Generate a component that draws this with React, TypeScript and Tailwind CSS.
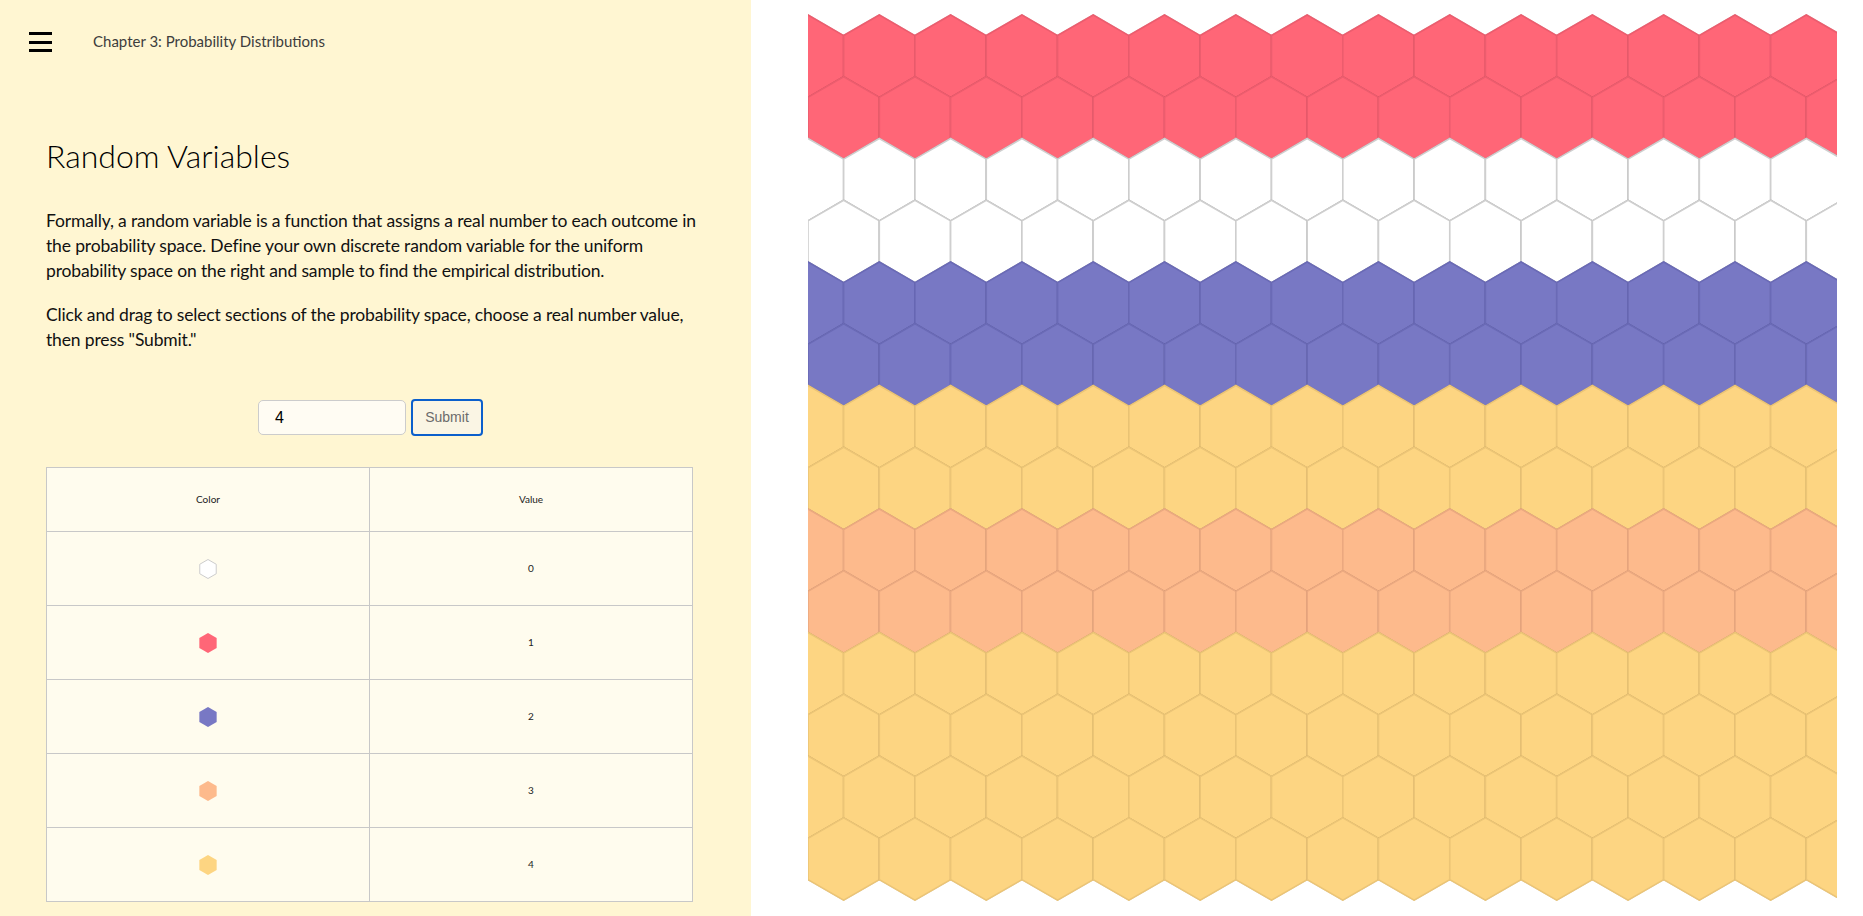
import React from "react";

const S = 41.17;
const W = S * Math.sqrt(3);

type HexStyle = { fill: string; stroke: string };
const RED: HexStyle = { fill: "#FF6677", stroke: "#EC5D6E" };
const WHITE: HexStyle = { fill: "#FFFFFF", stroke: "#CFCFCF" };
const BLUE: HexStyle = { fill: "#7878C4", stroke: "#6A6AB6" };
const YELLOW: HexStyle = { fill: "#FDD582", stroke: "#ECC576" };
const ORANGE: HexStyle = { fill: "#FDBA8C", stroke: "#EBA980" };

const rowStyles: HexStyle[] = [RED, RED, WHITE, WHITE, BLUE, BLUE, YELLOW, YELLOW, ORANGE, ORANGE, YELLOW, YELLOW, YELLOW, YELLOW];

function hexPoints(cx: number, cy: number, s: number) {
  const pts: string[] = [];
  for (let i = 0; i < 6; i++) {
    const a = ((-90 + 60 * i) * Math.PI) / 180;
    pts.push(`${(cx + s * Math.cos(a)).toFixed(2)},${(cy + s * Math.sin(a)).toFixed(2)}`);
  }
  return pts.join(" ");
}

function HexGrid() {
  const hexes: React.ReactNode[] = [];
  rowStyles.forEach((st, r) => {
    const cy = 15 + S + r * 1.5 * S;
    const offset = r % 2 === 0 ? 0 : W / 2;
    for (let k = -1; k <= 15; k++) {
      const cx = offset + k * W;
      hexes.push(
        <polygon
          key={`${r}-${k}`}
          points={hexPoints(cx, cy, S)}
          fill={st.fill}
          stroke={st.stroke}
          strokeWidth={1.6}
          filter="url(#hs)"
        />
      );
    }
  });
  return (
    <svg width={1029} height={916} viewBox="0 0 1029 916" className="block">
      <defs>
        <filter id="hs" x="-10%" y="-10%" width="120%" height="120%">
          <feDropShadow dx="0" dy="0" stdDeviation="0.7" floodColor="#000" floodOpacity="0.35" />
        </filter>
      </defs>
      {hexes}
    </svg>
  );
}

function MiniHex({ st, light }: { st: HexStyle; light?: boolean }) {
  return (
    <svg width={20} height={22} viewBox="0 0 20 22" className="inline-block">
      <polygon
        points={hexPoints(10, 11, light ? 9.5 : 10)}
        fill={st.fill}
        stroke={light ? "#CDCDCD" : st.fill}
        strokeWidth={light ? 1 : 0}
      />
    </svg>
  );
}

const rows: { st: HexStyle; v: string; light?: boolean }[] = [
  { st: WHITE, v: "0", light: true },
  { st: RED, v: "1" },
  { st: BLUE, v: "2" },
  { st: ORANGE, v: "3" },
  { st: YELLOW, v: "4" },
];

export default function App() {
  return (
    <div className="flex w-[1863px] h-[916px] overflow-hidden bg-white" style={{ fontFamily: "Lato, 'Liberation Sans', sans-serif" }}>
      <div className="w-[751px] h-[916px] shrink-0 bg-[#FFF6D2] flex flex-col">
        <div className="h-[84px] flex items-center pl-[29px]">
          <div className="flex flex-col gap-[5.5px] w-[23px]">
            <div className="h-[3px] bg-black" />
            <div className="h-[3px] bg-black" />
            <div className="h-[3px] bg-black" />
          </div>
          <div className="ml-[41px] text-[15px] text-[#3d3d3d] leading-none -mt-[2px]">Chapter 3: Probability Distributions</div>
        </div>
        <div className="pl-[46px] pr-[58px] flex flex-col">
          <h1 className="mt-[52px] text-[32px] leading-[40px] font-light text-black">Random Variables</h1>
          <div className="mt-[32px] text-[17.5px] tracking-[-0.15px] leading-[25px] text-[#111]">
            <div className="whitespace-nowrap">Formally, a random variable is a function that assigns a real number to each outcome in</div>
            <div className="whitespace-nowrap">the probability space. Define your own discrete random variable for the uniform</div>
            <div className="whitespace-nowrap">probability space on the right and sample to find the empirical distribution.</div>
          </div>
          <div className="mt-[19px] text-[17.5px] tracking-[-0.15px] leading-[25px] text-[#111]">
            <div className="whitespace-nowrap">Click and drag to select sections of the probability space, choose a real number value,</div>
            <div className="whitespace-nowrap">then press "Submit."</div>
          </div>
          <div className="mt-[47px] pl-[2px] flex items-center justify-center gap-[5px]" style={{ fontFamily: "'Liberation Sans', Arial, sans-serif" }}>
            <div className="w-[148px] h-[35px] border border-[#CCCCCC] rounded-[5px] bg-[#FFFCF3] pl-[16px] flex items-center text-[16px] text-black">4</div>
            <button className="w-[72px] h-[37px] border-2 border-[#0B5FCC] rounded-[4px] bg-[#FAF5E4] text-[14px] text-[#6B6B6B]">Submit</button>
          </div>
          <table className="mt-[31px] w-[647px] border-collapse bg-[#FFFCEE] table-fixed">
            <thead>
              <tr className="h-[64px]">
                <th className="border border-[#C8C8C8] font-normal text-[10px] text-[#222]">Color</th>
                <th className="border border-[#C8C8C8] font-normal text-[10px] text-[#222]">Value</th>
              </tr>
            </thead>
            <tbody>
              {rows.map((r) => (
                <tr key={r.v} className="h-[74px]">
                  <td className="border border-[#C8C8C8] text-center align-middle">
                    <div className="flex justify-center pt-[1px]">
                      <MiniHex st={r.st} light={r.light} />
                    </div>
                  </td>
                  <td className="border border-[#C8C8C8] text-center text-[10px] text-[#222]">{r.v}</td>
                </tr>
              ))}
            </tbody>
          </table>
        </div>
      </div>
      <div className="flex-1 h-[916px] bg-white pl-[57px]">
        <HexGrid />
      </div>
    </div>
  );
}
